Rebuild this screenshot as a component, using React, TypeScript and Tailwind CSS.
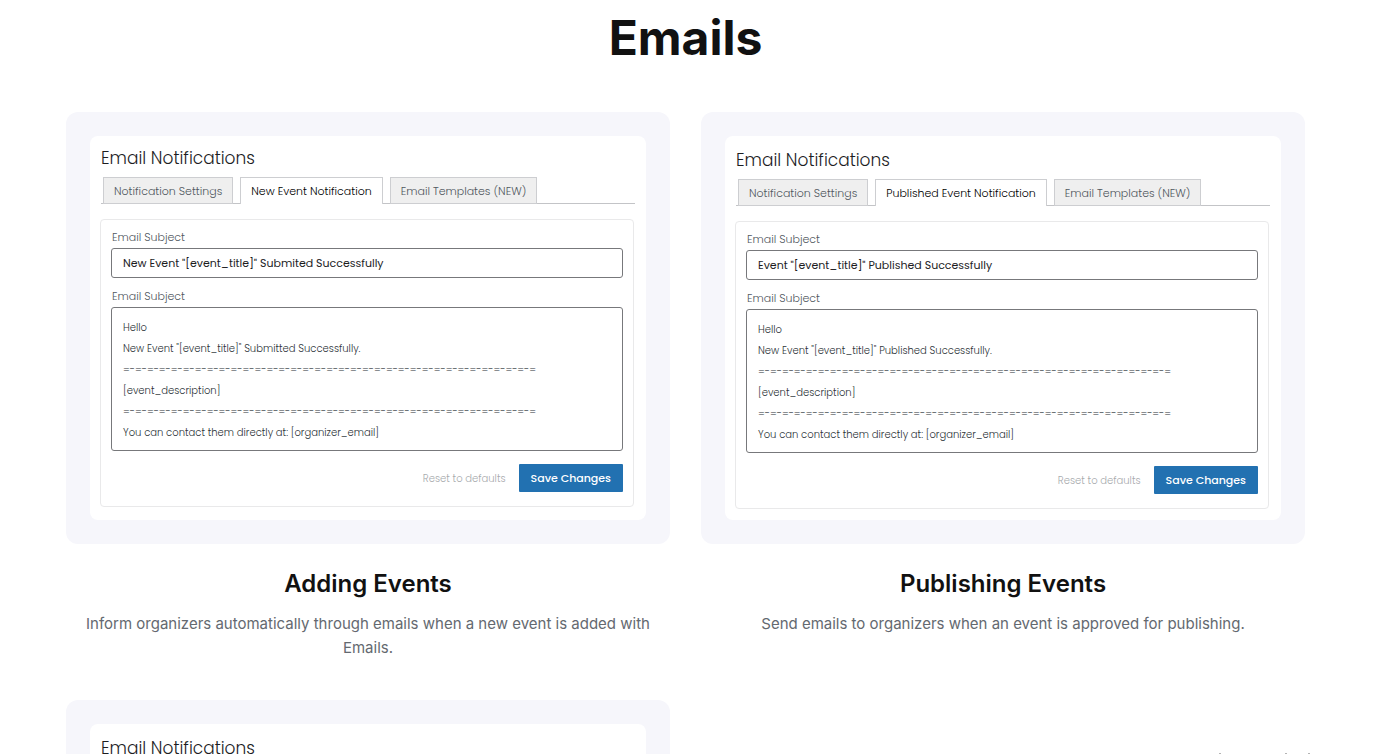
import { useId } from "react";

type EmailPanelProps = {
  tab: string;
  subject: string;
  message: string;
  lowered?: boolean;
};

const SEPARATOR = "=-".repeat(34) + "=";

function buildMessage(status: string) {
  return [
    "Hello",
    `New Event "[event_title]" ${status} Successfully.`,
    SEPARATOR,
    "[event_description]",
    SEPARATOR,
    "You can contact them directly at: [organizer_email]",
  ].join("\n");
}

const idleTab =
  "h-[27px] border border-[#cdced1] bg-[#efefef] px-[10px] text-[11px] leading-4 font-light text-[#50575e]";
const activeTab =
  "h-[27px] border border-b-0 border-[#cdced1] bg-white px-[10px] text-[11px] leading-4 font-light text-black";

function EmailPanel({ tab, subject, message, lowered }: EmailPanelProps) {
  const id = useId();
  return (
    <div className="rounded-xl bg-[#f6f6fb] p-6">
      <section
        className={`min-h-96 rounded-lg bg-white px-[10px] font-['Poppins','Inter',sans-serif] ${lowered ? "pt-3" : "pt-[10px]"}`}
      >
        <h3 className="px-px text-[17px] leading-6 font-light text-[#1d1d1f]">Email Notifications</h3>
        <div className="mt-[7px] mr-px ml-px flex">
          <span className="w-[2px] border-b border-[#c3c4c7]" />
          <button type="button" className={idleTab}>Notification Settings</button>
          <span className="w-[7px] border-b border-[#c3c4c7]" />
          <button type="button" className={activeTab}>{tab}</button>
          <span className="w-[7px] border-b border-[#c3c4c7]" />
          <button type="button" className={idleTab}>Email Templates (NEW)</button>
          <span className="flex-1 border-b border-[#c3c4c7]" />
        </div>
        <form
          className="mt-[15px] mr-[2px] rounded-sm border border-[#e9e9ea] px-[10px] pt-[9px] pb-[14px]"
          onSubmit={(e) => e.preventDefault()}
        >
          <label htmlFor={`${id}-subject`} className="block px-px text-[11px] leading-4 font-light text-[#50575e]">
            Email Subject
          </label>
          <input
            id={`${id}-subject`}
            defaultValue={subject}
            className="mt-[3px] block h-[30px] w-full rounded-[3px] border border-[#77787b] px-[11px] text-[11px] text-[#1d1d1f]"
          />
          <label htmlFor={`${id}-message`} className="mt-[10px] block px-px text-[11px] leading-4 font-light text-[#50575e]">
            Email Subject
          </label>
          <textarea
            id={`${id}-message`}
            defaultValue={message}
            className="mt-[3px] block h-36 w-full resize-none overflow-hidden rounded-[3px] border border-[#77787b] px-[11px] py-[9px] text-[10px] leading-[21px] font-light text-[#2c3338]"
          />
          <div className="mt-[13px] flex items-center justify-end gap-[13px]">
            <button type="reset" className="text-[10px] font-light text-[#a7aaad]">Reset to defaults</button>
            <button type="submit" className="h-7 rounded-[1px] bg-[#2271b1] px-3 text-[11px] font-medium text-white">
              Save Changes
            </button>
          </div>
        </form>
      </section>
    </div>
  );
}

function Feature({ title, text, ...panel }: EmailPanelProps & { title: string; text: string }) {
  return (
    <article className="text-center">
      <div className="text-left">
        <EmailPanel {...panel} />
      </div>
      <h2 className="mt-6 text-2xl font-semibold text-[#111111]">{title}</h2>
      <p className="mt-3 px-4 text-[15px] leading-6 text-[#646970]">{text}</p>
    </article>
  );
}

export default function App() {
  return (
    <div className="h-screen overflow-hidden bg-white font-['Inter',sans-serif]">
      <main className="pr-[73px] pl-[66px]">
        <h1 className="pt-2 text-center text-5xl leading-[60px] font-bold text-[#111111]">Emails</h1>
        <div className="mt-11 grid grid-cols-2 gap-x-[31px] gap-y-10">
          <Feature
            title="Adding Events"
            text="Inform organizers automatically through emails when a new event is added with Emails."
            tab="New Event Notification"
            subject={'New Event "[event_title]" Submited Successfully'}
            message={buildMessage("Submitted")}
          />
          <Feature
            title="Publishing Events"
            text="Send emails to organizers when an event is approved for publishing."
            tab="Published Event Notification"
            subject={'Event "[event_title]" Published Successfully'}
            message={buildMessage("Published")}
            lowered
          />
          <EmailPanel
            tab="New Event Notification"
            subject={'New Event "[event_title]" Submited Successfully'}
            message={buildMessage("Submitted")}
            lowered
          />
        </div>
      </main>
      <div aria-hidden="true" className="fixed right-[68px] bottom-0 flex">
        <span className="mr-16 h-px w-[2px] bg-[#b4b4b4]" />
        <span className="mr-[21px] h-px w-[2px] bg-[#b4b4b4]" />
        <span className="h-px w-[2px] bg-[#b4b4b4]" />
      </div>
    </div>
  );
}
